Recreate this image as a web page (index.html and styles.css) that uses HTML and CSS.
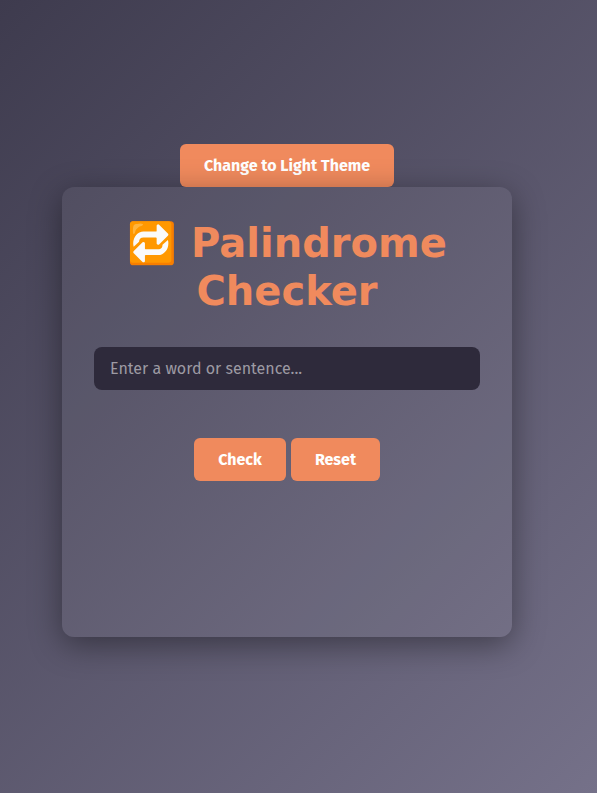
FILE: index.html
```html
<!DOCTYPE html>
<html lang="en">
<head>
<meta charset="utf-8">
<title>Palindrome Checker</title>
<link rel="stylesheet" href="styles.css">
</head>
<body>
<main class="page">
  <button class="btn theme">Change to Light Theme</button>
  <section class="card">
    <h1 class="title">🔁 Palindrome Checker</h1>
    <input class="field" type="text" placeholder="Enter a word or sentence...">
    <div class="actions">
      <button class="btn check">Check</button>
      <button class="btn reset">Reset</button>
    </div>
  </section>
</main>
</body>
</html>
```
FILE: styles.css
```css
* { box-sizing: border-box; margin: 0; padding: 0; }
body {
  min-height: 100vh;
  background: linear-gradient(135deg, #3e3b4e, #757189);
  font-family: "Fira Sans", "Noto Sans", sans-serif;
}
.page {
  width: 574px;
  height: 793px;
  padding-top: 144px;
  display: flex;
  flex-direction: column;
  align-items: center;
}
.btn {
  height: 43px;
  border: 0;
  border-radius: 6px;
  background: #f08a5d;
  color: #fff;
  font: 700 16px "Fira Sans", "Noto Sans", sans-serif;
  white-space: nowrap;
}
.theme { width: 214px; }
.card {
  width: 450px;
  height: 450px;
  padding: 32px;
  border-radius: 12px;
  background: rgba(255, 255, 255, 0.05);
  box-shadow: 0 8px 32px rgba(0, 0, 0, 0.4);
}
.title {
  color: #f08a5d;
  font: bold 40px/48px "DejaVu Sans", sans-serif;
  text-align: center;
}
.field {
  display: block;
  width: 100%;
  height: 43px;
  margin-top: 32px;
  padding: 0 16px;
  border: 0;
  border-radius: 8px;
  background: #2e2a3b;
  color: #fff;
  font: 16px "Fira Sans", "Noto Sans", sans-serif;
}
.field::placeholder { color: #9d9aa3; }
.actions { display: flex; justify-content: center; gap: 5px; margin-top: 48px; }
.check { width: 92px; }
.reset { width: 89px; }
```
